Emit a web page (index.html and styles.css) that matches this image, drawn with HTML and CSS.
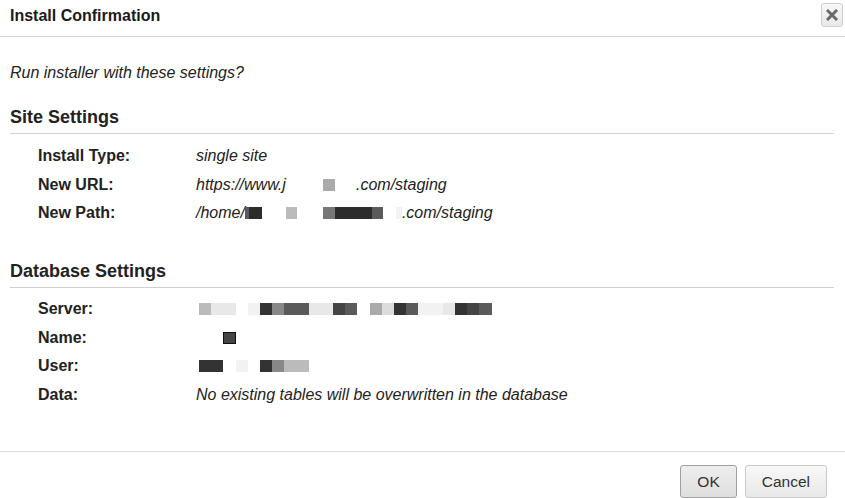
FILE: index.html
```html
<!DOCTYPE html>
<html>
<head>
<meta charset="utf-8">
<link rel="stylesheet" href="styles.css">
</head>
<body>
<div class="dialog">
  <div class="titlebar">
    <span class="title">Install Confirmation</span>
    <button class="close" aria-label="Close">
      <svg width="12" height="12" viewBox="0 0 12 12"><path d="M2 2 L10 10 M10 2 L2 10" stroke="#6a6a6a" stroke-width="3" stroke-linecap="square"/></svg>
    </button>
  </div>
  <div class="content">
    <p class="intro">Run installer with these settings?</p>

    <h2 class="section">Site Settings</h2>
    <div class="rows">
      <div class="row"><span class="label">Install Type:</span><span class="value">single site</span></div>
      <div class="row"><span class="label">New URL:</span><span class="value">https://www.j<span class="redact"><i class="sp w37"></i><i class="g7"></i><i class="sp w21"></i></span>.com/staging</span></div>
      <div class="row"><span class="label">New Path:</span><span class="value">/home/<span class="redact"><i class="g4 w4"></i><i class="g1 w13"></i><i class="sp w24"></i><i class="g8 w11"></i><i class="sp w26"></i><i class="g5 w12"></i><i class="g1 w37"></i><i class="g4 w11"></i><i class="sp w13"></i><i class="g11 w6"></i></span>.com/staging</span></div>
    </div>

    <h2 class="section db">Database Settings</h2>
    <div class="rows db-rows">
      <div class="row"><span class="label">Server:</span><span class="value"><span class="redact shift"><i class="g8"></i><i class="g10"></i><i class="g10"></i><i class="c0"></i><i class="g11"></i><i class="g2"></i><i class="g6"></i><i class="g4"></i><i class="g4"></i><i class="g10"></i><i class="g10"></i><i class="g3"></i><i class="g4"></i><i class="c0"></i><i class="g7"></i><i class="g9"></i><i class="g2"></i><i class="g4"></i><i class="g11"></i><i class="g11"></i><i class="g10"></i><i class="g2"></i><i class="g3"></i><i class="g4"></i></span></span></div>
      <div class="row"><span class="label">Name:</span><span class="value"><span class="redact shift"><i class="c0"></i><i class="c0"></i><i class="g3 box"></i></span></span></div>
      <div class="row"><span class="label">User:</span><span class="value"><span class="redact shift"><i class="g2"></i><i class="g2"></i><i class="c0"></i><i class="g11"></i><i class="c0"></i><i class="g2"></i><i class="g6"></i><i class="g8"></i><i class="g8"></i></span></span></div>
      <div class="row"><span class="label">Data:</span><span class="value">No existing tables will be overwritten in the database</span></div>
    </div>
  </div>
  <div class="footer">
    <button class="btn btn-ok">OK</button>
    <button class="btn">Cancel</button>
  </div>
</div>
</body>
</html>
```

FILE: styles.css
```css
html, body {
  margin: 0;
  padding: 0;
  background: #fff;
}
body {
  font-family: "Liberation Sans", Arial, sans-serif;
  color: #222;
  width: 845px;
  height: 498px;
  overflow: hidden;
}
.dialog {
  display: flex;
  flex-direction: column;
  height: 498px;
}
.titlebar {
  height: 36px;
  border-bottom: 1px solid #d6d6d6;
  display: flex;
  align-items: center;
  justify-content: space-between;
  padding: 0 2px 0 10px;
  box-sizing: content-box;
  flex: none;
}
.title {
  font-size: 16px;
  font-weight: bold;
  color: #1a1a1a;
  margin-top: -4px;
}
.close {
  width: 22px;
  height: 24px;
  margin-top: -6px;
  padding: 0;
  border: 1px solid #cfcfcf;
  border-radius: 3px;
  background: linear-gradient(#f7f7f7, #e9e9e9);
  display: flex;
  align-items: center;
  justify-content: center;
}
.content {
  padding: 0 11px 0 10px;
  flex: 1;
}
.intro {
  margin: 26px 0 0;
  font-style: italic;
  font-size: 16px;
  line-height: 20px;
  color: #222;
}
.section {
  margin: 22px 0 0;
  font-size: 18px;
  font-weight: bold;
  line-height: 24px;
  padding-bottom: 4px;
  border-bottom: 1px solid #d0d0d0;
  color: #222;
}
.section.db {
  margin-top: 31px;
}
.rows {
  padding: 8px 0 0 28px;
}
.rows.db-rows {
  padding-top: 7px;
}
.row {
  display: flex;
  height: 28.6px;
  align-items: center;
  font-size: 16px;
}
.label {
  width: 158px;
  font-weight: bold;
  color: #222;
}
.value {
  font-style: italic;
  color: #222;
  display: flex;
  align-items: center;
}
.redact {
  display: inline-flex;
  align-items: center;
}
.redact.shift {
  margin-left: 3px;
}
.redact i {
  display: inline-block;
  width: 12.2px;
  height: 12px;
  flex: none;
}
.redact i.sp { background: transparent; }
.redact i.w4 { width: 4px; }
.redact i.w6 { width: 6px; }
.redact i.w11 { width: 11px; }
.redact i.w12 { width: 12px; }
.redact i.w13 { width: 13px; }
.redact i.w21 { width: 21px; }
.redact i.w24 { width: 24px; }
.redact i.w26 { width: 26px; }
.redact i.w37 { width: 37px; }
.redact i.box { outline: 1px solid #111; outline-offset: -1px; }
.c0 { background: transparent; }
.g1 { background: #2c2c2c; }
.g2 { background: #333; }
.g3 { background: #444; }
.g4 { background: #5a5a5a; }
.g5 { background: #777; }
.g6 { background: #888; }
.g7 { background: #aaa; }
.g8 { background: #bbb; }
.g9 { background: #dcdcdc; }
.g10 { background: #e8e8e8; }
.g11 { background: #f2f2f2; }
.footer {
  flex: none;
  box-sizing: border-box;
  border-top: 1px solid #dcdcdc;
  height: 47px;
  display: flex;
  justify-content: flex-end;
  align-items: flex-start;
  gap: 8px;
  padding: 13px 18px 0 0;
}
.btn {
  font-family: "Liberation Sans", Arial, sans-serif;
  font-size: 15.5px;
  color: #333;
  height: 33px;
  padding: 0 16px;
  border: 1px solid #cacaca;
  border-radius: 3px;
  background: linear-gradient(#f8f8f8, #e8e8e8);
  flex: none;
}
.btn-ok {
  border-color: #a0a0a0;
  background: linear-gradient(#eeeeee, #dedede);
}
```
